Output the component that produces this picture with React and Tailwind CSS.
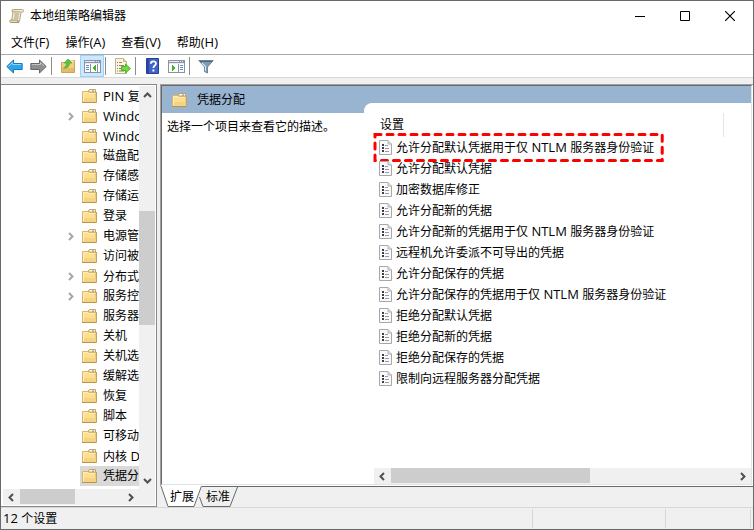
import { useState } from "react";

const TREE = [
    { label: "PIN 复杂性" },
    { label: "Windows 热启动", expandable: true },
    { label: "Windows 时间服务" },
    { label: "磁盘配额" },
    { label: "存储感知" },
    { label: "存储运行状况" },
    { label: "登录" },
    { label: "电源管理", expandable: true },
    { label: "访问被拒绝协助" },
    { label: "分布式 COM", expandable: true },
    { label: "服务控制管理器", expandable: true },
    { label: "服务器管理器" },
    { label: "关机" },
    { label: "关机选项" },
    { label: "缓解选项" },
    { label: "恢复" },
    { label: "脚本" },
    { label: "可移动存储访问" },
    { label: "内核 DMA 保护" },
    { label: "凭据分配" },
];

const SETTINGS = [
    "允许分配默认凭据用于仅 NTLM 服务器身份验证",
    "允许分配默认凭据",
    "加密数据库修正",
    "允许分配新的凭据",
    "允许分配新的凭据用于仅 NTLM 服务器身份验证",
    "远程机允许委派不可导出的凭据",
    "允许分配保存的凭据",
    "允许分配保存的凭据用于仅 NTLM 服务器身份验证",
    "拒绝分配默认凭据",
    "拒绝分配新的凭据",
    "拒绝分配保存的凭据",
    "限制向远程服务器分配凭据",
];

const MENUS = ["文件(F)", "操作(A)", "查看(V)", "帮助(H)"];

// latin runs are set one pixel larger than the chinese text around them
function Label({ children }) {
    return (
        <span className="whitespace-pre">
            {children.split(/([\x20-\x7e]+)/).map((part, i) =>
                i % 2 ? <span key={i} className="text-[13px]">{part}</span> : part
            )}
        </span>
    );
}

function FolderIcon() {
    return (
        <svg width="15" height="14" viewBox="0 0 15 14" className="shrink-0" aria-hidden="true">
            <path d="M6.500 3.500V1.500L7.500.5h6v3z" fill="#ecd08c" stroke="#c4a25e" />
            <path d="M8 1.500h5" stroke="#fff" />
            <path d="M10 2h2" stroke="#4a90e0" />
            <path d="M.5 2.500h5.500l1 1h7v9.500H.5z" fill="#fcdf92" stroke="#dcb464" />
            <path d="M1 9h13v4H1z" fill="#f6d283" />
            <path d="M1.500 12.500V3.500H5.600l1 1H13" fill="none" stroke="#ffeebc" />
            <path d="M0 13.500h14.500" stroke="#b9944c" />
            <path d="M14.500 3v10.500" stroke="#c4a25e" />
        </svg>
    );
}

function PolicyIcon() {
    return (
        <svg width="13" height="15" viewBox="0 0 13 15" className="shrink-0" aria-hidden="true">
            <path d="M.5.5h8.500l3.500 3.500v10.500H.5z" fill="#fafafa" stroke="#a8a8a8" />
            <path d="M9 .5V4h3.500" fill="#ddd" stroke="#b4b4b4" />
            <path d="M3 4h2v2H3zM3 7h2v2H3zM3 10h2v2H3z" fill="#3c3c50" />
            <path d="M6 5.500h3M6 8.500h4M6 11.500h4" stroke="#9a9aac" />
        </svg>
    );
}

function ScrollIcon() {
    return (
        <svg width="16" height="16" viewBox="0 0 16 16" aria-hidden="true">
            <path d="M4 1.500h9.500c1.500 0 1.500 2.500.2 2.500H12l-1.500 9.500H2.500L4 4z" fill="#f5ecd0" stroke="#b3a47d" />
            <path d="M4 1.500C2.500 1.500 2.500 4 4 4h7.500" fill="#e6d8b0" stroke="#b3a47d" />
            <path d="M1.500 12h7.500c-.5 1.500 0 2.500 1 2.500H2C.5 14.500.5 12.500 1.500 12z" fill="#e9dcb4" stroke="#a4956e" />
            <path d="M5.500 6h4.500M5.300 8h4.400M5 10h4.500" stroke="#a09a86" />
        </svg>
    );
}

function ArrowIcon({ forward }) {
    return (
        <svg width="17" height="15" viewBox="0 0 17 15" aria-hidden="true">
            {forward ? (
                <>
                    <path d="M16.200 7.500L9.500 1v3.500H.8v6h8.700V14z" fill="#8e8e8e" stroke="#666" />
                    <path d="M1.800 5.500h8.700V3.500l4 4" fill="none" stroke="#c2c2c2" />
                </>
            ) : (
                <>
                    <path d="M.8 7.500L7.500 1v3.500h8.700v6H7.500V14z" fill="#2ea6ea" stroke="#1b78c0" />
                    <path d="M2.500 7.500l4-4v2h8.700" fill="none" stroke="#8ad6fa" />
                </>
            )}
        </svg>
    );
}

function UpFolderIcon() {
    return (
        <svg width="16" height="16" viewBox="0 0 16 16" aria-hidden="true">
            <path d="M1.500 4.500h5l1-2h7v12h-13z" fill="#f2cf7e" stroke="#c8a45c" />
            <path d="M2 10h12v4H2z" fill="#e5bb66" />
            <path d="M10 3h3.500" stroke="#fff" />
            <path d="M3.500 10C5.500 9 6.500 7.500 6.500 5H4l4-4 4 4H9.500c0 3.500-2.500 5.500-6 5z" fill="#57c832" stroke="#3f9d2d" strokeWidth=".6" />
        </svg>
    );
}

// console window with the tree pane on the left, or the action pane on the right
function PaneIcon({ right }) {
    return (
        <svg width="17" height="13" viewBox="0 0 17 13" shapeRendering="crispEdges" aria-hidden="true">
            <path d="M.5.5h16v12H.5z" fill="#fff" stroke="#8a929e" />
            <path d="M1 1h15v3H1z" fill="#8c96a5" />
            <path d="M1 1h10v1H1zM12 1h1v1h-1zM14 1h1v1h-1zM1 3h15v1H1z" fill="#e8ecf1" />
            {right ? (
                <>
                    <path d="M10 4h1v8h-1z" fill="#8a929e" />
                    <path d="M12 5h3v1h-3zM12 7h3v1h-3zM12 9h3v1h-3z" fill="#5b8fd0" />
                    <path d="M4 5l4 3-4 3z" fill="#3cb521" />
                </>
            ) : (
                <>
                    <path d="M6 4h1v8H6z" fill="#8a929e" />
                    <path d="M2 5h3v1H2zM2 7h3v1H2zM2 9h3v1H2z" fill="#5b8fd0" />
                    <path d="M12 5v6L8 8z" fill="#3cb521" />
                    <path d="M13 4h1v8h-1z" fill="#8a929e" />
                </>
            )}
        </svg>
    );
}

function ExportIcon() {
    return (
        <svg width="17" height="16" viewBox="0 0 17 16" aria-hidden="true">
            <path d="M1.500.5h8l3 3v12h-11z" fill="#fdf6da" stroke="#bfb491" />
            <path d="M9.500.5v3h3" fill="#e8dfbd" stroke="#bfb491" />
            <path d="M3 4.500h1M3 7.500h1M3 10.500h1M3 13h1M5 4.500h3M5 7.500h5M5 10.500h2M5 13h5" stroke="#8a8470" />
            <path d="M7.500 8.500h4V6l5 4.500-5 4.500v-2.500h-4z" fill="#6fdc3c" stroke="#3aa01f" strokeWidth=".8" />
        </svg>
    );
}

function HelpIcon() {
    return (
        <svg width="13" height="16" viewBox="0 0 13 16" aria-hidden="true">
            <path d="M.5.5h12v15H.5z" fill="#3f63c8" stroke="#27408f" />
            <path d="M1 1h2v14H1z" fill="#2b479f" />
            <path d="M4.800 5.800C4.800 2.500 10 2.700 10 5.500c0 2-2.600 2-2.600 4.500" fill="none" stroke="#fff" strokeWidth="1.800" />
            <path d="M6.400 11.500h2v2h-2z" fill="#fff" />
        </svg>
    );
}

function FilterIcon() {
    return (
        <svg width="16" height="15" viewBox="0 0 16 15" aria-hidden="true">
            <path d="M.8 1.500h14.400L9.500 8v6l-3-1.500V8z" fill="#7d9bb4" stroke="#6d8498" />
            <path d="M2 2.500h12" stroke="#4f6578" />
            <path d="M4 4l3.500 3.500V12" fill="none" stroke="#d3e3ef" strokeWidth="1.200" />
        </svg>
    );
}

const CHEVRONS = {
    up: "M1 6l3.500-3.500L8 6",
    down: "M1 3l3.500 3.500L8 3",
    left: "M6 1L2.500 4.500 6 8",
    right: "M3 1l3.500 3.500L3 8",
};

function Chevron({ dir, color = "#505050" }) {
    return (
        <svg width="9" height="9" viewBox="0 0 9 9" className="shrink-0" aria-hidden="true">
            <path d={CHEVRONS[dir]} fill="none" stroke={color} strokeWidth="2" />
        </svg>
    );
}

function ScrollButton({ dir, label }) {
    return (
        <button aria-label={label} className="flex h-4 w-[17px] shrink-0 items-center justify-center">
            <Chevron dir={dir} />
        </button>
    );
}

function ToolButton({ label, active, children }) {
    return (
        <button
            aria-label={label}
            className={`flex h-[22px] w-6 items-center justify-center border ${
                active ? "border-[#99d1ff] bg-[#cce8ff]" : "border-transparent"
            }`}
        >
            {children}
        </button>
    );
}

function Separator() {
    return <div className="h-[18px] w-px bg-[#8c8c8c]" />;
}

function App() {
    const [selected, setSelected] = useState("凭据分配");

    return (
        <div className="flex h-screen flex-col border border-[#696969] bg-[#f0f0f0] font-['Open_Sans','Noto_Sans_CJK_SC',sans-serif] text-[12px] leading-4 text-black">
            {/* title bar */}
            <header className="flex h-[30px] shrink-0 items-center bg-white pl-2">
                <ScrollIcon />
                <h1 className="ml-[5px] flex-1">本地组策略编辑器</h1>
                <button aria-label="最小化" className="flex h-7 w-[45px] items-center justify-center">
                    <svg width="10" height="10" aria-hidden="true"><path d="M0 5.500h10" stroke="#000" /></svg>
                </button>
                <button aria-label="最大化" className="flex h-7 w-[45px] items-center justify-center">
                    <svg width="10" height="10" aria-hidden="true"><path d="M.5.5h9v9h-9z" fill="none" stroke="#000" /></svg>
                </button>
                <button aria-label="关闭" className="flex h-7 w-[46px] items-center justify-center">
                    <svg width="10" height="10" aria-hidden="true"><path d="M0 0l10 10M10 0L0 10" stroke="#000" strokeWidth="1.200" /></svg>
                </button>
            </header>

            <nav className="flex h-[23px] shrink-0 items-center gap-4 bg-white pl-[10px]">
                {MENUS.map((m) => (
                    <button key={m}><Label>{m}</Label></button>
                ))}
            </nav>

            <div className="flex h-6 shrink-0 items-center gap-px border-y border-t-[#aaaaaa] border-b-[#d9d9d9] bg-white pl-px">
                <div className="flex">
                    <ToolButton label="后退"><ArrowIcon /></ToolButton>
                    <ToolButton label="前进"><ArrowIcon forward /></ToolButton>
                </div>
                <div className="flex items-center gap-1">
                    <Separator />
                    <div className="flex">
                        <ToolButton label="向上"><UpFolderIcon /></ToolButton>
                        <ToolButton label="显示/隐藏控制台树" active><PaneIcon /></ToolButton>
                    </div>
                </div>
                <div className="flex items-center gap-1">
                    <Separator />
                    <ToolButton label="导出列表"><ExportIcon /></ToolButton>
                </div>
                <div className="flex items-center gap-1">
                    <Separator />
                    <div className="flex">
                        <ToolButton label="帮助"><HelpIcon /></ToolButton>
                        <ToolButton label="显示/隐藏操作窗格"><PaneIcon right /></ToolButton>
                    </div>
                </div>
                <div className="flex items-center gap-1">
                    <Separator />
                    <ToolButton label="筛选器"><FilterIcon /></ToolButton>
                </div>
            </div>

            <main className="flex min-h-0 flex-1 gap-[3px] pt-[6px]">
                {/* console tree */}
                <aside className="flex w-[156px] shrink-0 flex-col border-y border-r border-[#828790] bg-white py-px pr-px pl-0.5">
                    <div className="flex min-h-0 flex-1">
                        <ul className="min-w-0 flex-1 overflow-hidden">
                            {TREE.map((node) => (
                                <li key={node.label} className="flex h-5 items-center pl-[63px]">
                                    <span className="flex w-[14px] shrink-0">
                                        {node.expandable && <Chevron dir="right" color="#a6a6a6" />}
                                    </span>
                                    <button
                                        onClick={() => setSelected(node.label)}
                                        className={`flex h-5 shrink-0 items-center gap-[6px] pr-1 pl-0.5 whitespace-nowrap ${
                                            node.label === selected ? "bg-[#d9d9d9]" : ""
                                        }`}
                                    >
                                        <FolderIcon />
                                        <Label>{node.label}</Label>
                                    </button>
                                </li>
                            ))}
                        </ul>
                        <div className="flex w-4 shrink-0 flex-col items-center bg-[#f0f0f0] py-px">
                            <ScrollButton dir="up" label="向上滚动" />
                            <div className="w-full flex-1 pt-[108px]">
                                <div className="h-[114px] bg-[#cdcdcd]" />
                            </div>
                            <ScrollButton dir="down" label="向下滚动" />
                        </div>
                    </div>
                    <div className="flex h-4 shrink-0 bg-[#f0f0f0] pr-4">
                        <ScrollButton dir="left" label="向左滚动" />
                        <div className="flex-1">
                            <div className="h-[15px] w-[55px] bg-[#cdcdcd]" />
                        </div>
                        <ScrollButton dir="right" label="向右滚动" />
                    </div>
                </aside>

                <section className="flex min-w-0 flex-1 flex-col">
                    <div className="min-h-0 flex-1 border-t border-l border-[#a0a0a0] bg-white pr-px pb-px">
                        <div className="flex h-full border border-t-[#696969] border-r-[#e3e3e3] border-b-[#e3e3e3] border-l-[#696969]">
                            <div className="w-[202px] shrink-0">
                                <div className="flex h-[27px] items-center gap-[10px] bg-[#99b4d1] pl-[10px]">
                                    <FolderIcon />
                                    <h2>{selected}</h2>
                                </div>
                                <p className="pt-[6px] pl-[5px]">选择一个项目来查看它的描述。</p>
                            </div>

                            <div className="flex min-w-0 flex-1 bg-[#99b4d1] pt-[17px]">
                                <div className="flex min-w-0 flex-1 flex-col rounded-tl-lg bg-white pt-[10px] pl-[10px]">
                                    <div className="min-h-0 flex-1 pr-[27px]">
                                        <table className="w-full">
                                            <thead>
                                                <tr>
                                                    <th className="h-6 border-r border-[#e5e5e5] p-0 pl-[6px] text-left font-normal">设置</th>
                                                </tr>
                                            </thead>
                                            <tbody>
                                                {SETTINGS.map((name, i) => (
                                                    <tr key={name}>
                                                        <td className="h-[21px] p-0 pl-[5px]">
                                                            <button className="relative flex h-5 items-center gap-1 whitespace-nowrap">
                                                                <PolicyIcon />
                                                                <Label>{name}</Label>
                                                                {i === 0 && (
                                                                    <span className="absolute -inset-x-[6px] -inset-y-[5px]">
                                                                        <svg className="h-full w-full overflow-visible" aria-hidden="true">
                                                                            <rect x="2" y="1.500" width="100%" height="26" fill="none" stroke="#fe0000" strokeWidth="3" strokeLinecap="round" strokeDasharray="6 6" />
                                                                        </svg>
                                                                    </span>
                                                                )}
                                                            </button>
                                                        </td>
                                                    </tr>
                                                ))}
                                            </tbody>
                                        </table>
                                    </div>
                                    <div className="flex h-4 shrink-0 bg-[#f0f0f0]">
                                        <ScrollButton dir="left" label="列表向左滚动" />
                                        <div className="flex-1">
                                            <div className="h-[15px] w-[199px] bg-[#cdcdcd]" />
                                        </div>
                                        <ScrollButton dir="right" label="列表向右滚动" />
                                    </div>
                                </div>
                            </div>
                        </div>
                    </div>

                    {/* view tabs */}
                    <div className="flex h-[21px] shrink-0">
                        <button className="relative h-full w-[42px] pl-[2px]">
                            <svg width="42" height="21" className="absolute inset-0" aria-hidden="true">
                                <path d="M1 0l7 20.500h26L42 0z" fill="#fff" />
                                <path d="M1 0l7 20.500h26L41.500 0" fill="none" stroke="#696969" />
                            </svg>
                            <span className="relative">扩展</span>
                        </button>
                        <button className="relative h-full w-9 border-t border-[#696969] pr-[4px]">
                            <svg width="40" height="20" className="absolute top-0 -left-1 overflow-visible" aria-hidden="true">
                                <path d="M1.500 10L5 19.500h27L39.500 0" fill="none" stroke="#696969" />
                            </svg>
                            <span className="relative">标准</span>
                        </button>
                        <div className="flex-1 border-t border-[#696969]" />
                    </div>
                </section>
            </main>

            <footer className="flex h-[22px] shrink-0 border-t border-[#d7d7d7] py-px pr-0.5">
                <span className="flex flex-1 items-center border-r border-[#d7d7d7] pl-0.5"><Label>12 个设置</Label></span>
                <span className="w-[133px] border-r border-[#d7d7d7]" />
                <span className="w-[85px] border-r border-[#d7d7d7]" />
            </footer>
        </div>
    );
}

export default App;
